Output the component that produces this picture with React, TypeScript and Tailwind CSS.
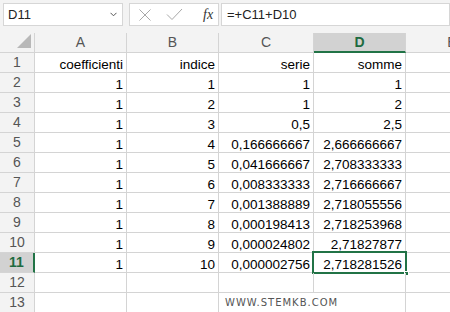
import React from "react";

const cols = [
  { key: "A", w: "w-[92px]" },
  { key: "B", w: "w-[92px]" },
  { key: "C", w: "w-[95px]" },
  { key: "D", w: "w-[92px]" },
];

const rows: string[][] = [
  ["coefficienti", "indice", "serie", "somme"],
  ["1", "1", "1", "1"],
  ["1", "2", "1", "2"],
  ["1", "3", "0,5", "2,5"],
  ["1", "4", "0,166666667", "2,666666667"],
  ["1", "5", "0,041666667", "2,708333333"],
  ["1", "6", "0,008333333", "2,716666667"],
  ["1", "7", "0,001388889", "2,718055556"],
  ["1", "8", "0,000198413", "2,718253968"],
  ["1", "9", "0,000024802", "2,71827877"],
  ["1", "10", "0,000002756", "2,718281526"],
  ["", "", "", ""],
  ["", "", "", ""],
];

const SEL_ROW = 11;
const SEL_COL = 3;

const App: React.FC = () => {
  return (
    <div
      className="w-[450px] h-[312px] overflow-hidden bg-white text-[#000] relative"
      style={{ fontFamily: '"Liberation Sans", Arial, sans-serif' }}
    >
      {/* barra della formula */}
      <div className="h-[33px] bg-[#f3f3f3] flex items-start pt-[3px] pl-[3px] gap-[6px]">
        <div className="w-[120px] h-[23px] bg-white border border-[#d6d6d6] flex items-center justify-between pl-[4px] pr-[4px]">
          <span className="text-[13px] text-[#222]">D11</span>
          <svg width="7" height="5" viewBox="0 0 7 5" className="mr-[1px]">
            <path d="M0.5 0.8 L3.5 3.8 L6.5 0.8" stroke="#555" strokeWidth="1" fill="none" />
          </svg>
        </div>
        <div className="w-[90px] h-[23px] bg-white border border-[#d6d6d6] flex items-center">
          <svg width="14" height="14" viewBox="0 0 14 14" className="ml-[8px]">
            <path d="M1.5 1.5 L12.5 12.5 M12.5 1.5 L1.5 12.5" stroke="#a8a8a8" strokeWidth="1" fill="none" />
          </svg>
          <svg width="17" height="13" viewBox="0 0 17 13" className="ml-[14px]">
            <path d="M1 6.5 L6 11.5 L16 1" stroke="#a8a8a8" strokeWidth="1" fill="none" />
          </svg>
          <span
            className="ml-[20px] text-[14px] italic text-[#333] leading-none"
            style={{ fontFamily: '"Liberation Serif", "Times New Roman", serif' }}
          >
            fx
          </span>
        </div>
        <div className="flex-1 h-[23px] bg-white border border-[#d6d6d6] flex items-center pl-[5px] -ml-[4px]">
          <span className="text-[13px] text-[#222]">=+C11+D10</span>
        </div>
      </div>

      {/* intestazione colonne */}
      <div className="flex h-[20px] bg-[#f3f3f3]">
        <div className="w-[35px] shrink-0 border-r border-b border-[#d4d4d4] relative">
          <svg width="16" height="14" viewBox="0 0 16 14" className="absolute right-[3px] bottom-[4px]">
            <path d="M16 0 L16 14 L2 14 Z" fill="#b8b8b8" />
          </svg>
        </div>
        {cols.map((c, i) => (
          <div
            key={c.key}
            className={`${c.w} shrink-0 flex items-center justify-center text-[14px] border-r border-[#d4d4d4] ${
              i === SEL_COL
                ? "bg-[#d2d2d2] border-b-2 border-b-[#217346] text-[#1e6b40] font-bold"
                : "border-b text-[#555]"
            }`}
          >
            {c.key}
          </div>
        ))}
        <div className="w-[92px] shrink-0 border-b border-[#d4d4d4] flex items-center justify-center text-[14px] text-[#555]">
          E
        </div>
      </div>

      {/* righe */}
      {rows.map((r, ri) => {
        const n = ri + 1;
        const sel = n === SEL_ROW;
        return (
          <div key={n} className="flex h-[20px]">
            <div
              className={`w-[35px] shrink-0 border-b border-[#d4d4d4] flex items-center justify-center text-[14px] ${
                sel
                  ? "bg-[#d2d2d2] border-r-2 border-r-[#217346] text-[#1e6b40] font-bold"
                  : "bg-[#f3f3f3] border-r text-[#555]"
              }`}
            >
              {n}
            </div>
            {cols.map((c, ci) => (
              <div
                key={c.key}
                className={`${c.w} shrink-0 border-r border-b border-[#d4d4d4] flex items-end justify-end pr-[3px] text-[13.5px] leading-[15px] relative`}
              >
                {r[ci]}
                {sel && ci === SEL_COL && (
                  <>
                    <div className="absolute -left-[2px] -top-[2px] -right-[2px] -bottom-[2px] border-2 border-[#217346]" />
                    <div className="absolute -right-[4px] -bottom-[4px] w-[5px] h-[5px] bg-[#217346] border border-white" />
                  </>
                )}
              </div>
            ))}
            <div className="flex-1 border-b border-[#d4d4d4]" />
          </div>
        );
      })}

      {/* watermark */}
      <div
        className="absolute left-[219px] top-[293px] w-[185px] h-[19px] bg-white flex items-center pl-[6px] text-[10px] tracking-[1px] text-[#555]"
        style={{ fontFamily: '"DejaVu Sans", Verdana, sans-serif' }}
      >
        WWW.STEMKB.COM
      </div>
    </div>
  );
};

export default App;
